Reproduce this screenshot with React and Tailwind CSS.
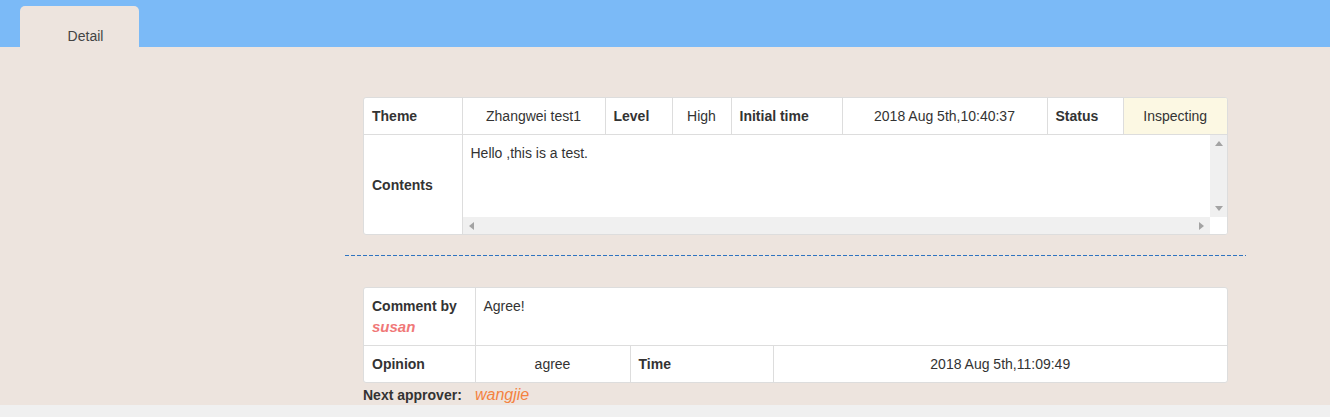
import React from "react"

const font = { fontFamily: "'Liberation Sans', Arial, sans-serif" }

function Tri({ dir }) {
  const pts = {
    up: "0,5 4,0 8,5",
    down: "0,0 8,0 4,5",
    left: "5,0 5,8 0,4",
    right: "0,0 0,8 5,4",
  }[dir]
  const vertical = dir === "up" || dir === "down"
  return (
    <svg width={vertical ? 8 : 5} height={vertical ? 5 : 8} viewBox={vertical ? "0 0 8 5" : "0 0 5 8"}>
      <polygon points={pts} fill="#a3a3a3" />
    </svg>
  )
}

function FakeTextarea() {
  return (
    <div className="flex flex-col h-[99px]">
      <div className="flex flex-1 min-h-0">
        <div className="flex-1 px-2 pt-2 leading-5">Hello ,this is a test.</div>
        <div className="w-[17px] bg-[#f0f0f0] flex flex-col items-center justify-between py-[6px]">
          <Tri dir="up" />
          <Tri dir="down" />
        </div>
      </div>
      <div className="flex h-[17px]">
        <div className="flex-1 bg-[#f0f0f0] flex items-center justify-between px-[6px]">
          <Tri dir="left" />
          <Tri dir="right" />
        </div>
        <div className="w-[17px] bg-white" />
      </div>
    </div>
  )
}

const th = "px-2 py-2 leading-5 font-bold text-left border-[#dddddd]"
const td = "px-2 py-2 leading-5 text-center border-[#dddddd]"

export default function App() {
  return (
    <div className="min-h-screen bg-[#f0f0f0] text-sm text-[#333]" style={font}>
      <div className="h-[47px] bg-[#7bbaf7] flex items-end pl-5">
        <div className="w-[119px] h-[41px] rounded-t-[5px] bg-[#ede4de] text-center pt-[20px] pl-[12px] leading-5 text-[#444]">
          Detail
        </div>
      </div>

      <div className="bg-[#ede4de] pt-[50px] h-[358px]">
        <div className="ml-[345px] w-[901px]">
          <div className="mx-[18px] bg-white border border-[#dddddd] rounded-[3px] overflow-hidden">
            <table className="w-full table-fixed border-collapse">
              <colgroup>
                <col className="w-[98px]" />
                <col className="w-[143px]" />
                <col className="w-[67px]" />
                <col className="w-[59px]" />
                <col className="w-[111px]" />
                <col className="w-[205px]" />
                <col className="w-[76px]" />
                <col className="w-[104px]" />
              </colgroup>
              <tbody>
                <tr>
                  <th className={th}>Theme</th>
                  <td className={td + " border-l"}>Zhangwei test1</td>
                  <th className={th + " border-l"}>Level</th>
                  <td className={td + " border-l"}>High</td>
                  <th className={th + " border-l"}>Initial time</th>
                  <td className={td + " border-l"}>2018 Aug 5th,10:40:37</td>
                  <th className={th + " border-l"}>Status</th>
                  <td className={td + " border-l bg-[#fcf8e3]"}>Inspecting</td>
                </tr>
                <tr className="border-t border-[#dddddd]">
                  <th className={th + " align-middle"}>Contents</th>
                  <td colSpan={7} className="p-0 border-l border-[#dddddd] align-top">
                    <FakeTextarea />
                  </td>
                </tr>
              </tbody>
            </table>
          </div>

          <div className="mt-[20px] h-px bg-[repeating-linear-gradient(to_right,#2f74c0_0_4px,transparent_4px_6px)]" />

          <div className="mx-[18px] mt-[31px] bg-white border border-[#dddddd] rounded-[3px] overflow-hidden">
            <table className="w-full table-fixed border-collapse">
              <colgroup>
                <col className="w-[111px]" />
                <col className="w-[155px]" />
                <col className="w-[143px]" />
                <col className="w-[454px]" />
              </colgroup>
              <tbody>
                <tr>
                  <th className={th + " align-top pb-[8px]"}>
                    <div>Comment by</div>
                    <div className="italic text-[15px] leading-[21px] text-[#f07878]">susan</div>
                  </th>
                  <td colSpan={3} className="px-2 py-2 leading-5 align-top border-l border-[#dddddd]">
                    Agree!
                  </td>
                </tr>
                <tr className="border-t border-[#dddddd]">
                  <th className={th}>Opinion</th>
                  <td className={td + " border-l"}>agree</td>
                  <th className={th + " border-l"}>Time</th>
                  <td className={td + " border-l"}>2018 Aug 5th,11:09:49</td>
                </tr>
              </tbody>
            </table>
          </div>

          <div className="mx-[18px] flex items-center h-5 mt-[2px]">
            <span className="w-[112px] font-bold">Next approver:</span>
            <span className="italic text-base text-[#f4823f]">wangjie</span>
          </div>
        </div>
      </div>
    </div>
  )
}
